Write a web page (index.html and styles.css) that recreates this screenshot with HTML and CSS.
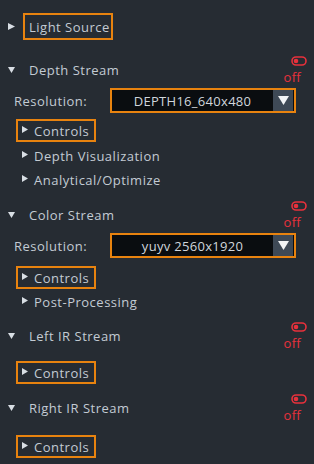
FILE: index.html
```html
<!DOCTYPE html>
<html>
<head>
<meta charset="utf-8">
<link rel="stylesheet" href="styles.css">
</head>
<body>
<div class="panel">
  <div class="top-row">
    <svg class="tri-big" viewBox="0 0 7 7"><polygon points="0,0 7,3.5 0,7" fill="#d8dee4"/></svg>
    <div class="box light">Light Source</div>
  </div>

  <div class="head m18">
    <div class="title"><svg class="tri-big down" viewBox="0 0 7 7"><polygon points="0,0 7,0 3.5,6" fill="#d8dee4"/></svg><span>Depth Stream</span></div>
    <div class="status"><svg class="toggle" viewBox="0 0 16 10"><rect x="1" y="1" width="14" height="8" rx="4" fill="none" stroke="#e8313c" stroke-width="1.6"/><circle cx="5" cy="5" r="2.3" fill="#e8313c"/></svg><span class="off">off</span></div>
  </div>
  <div class="res-row m3">
    <span class="res-label">Resolution:</span>
    <div class="combo"><span class="combo-text">DEPTH16_640x480</span><span class="combo-arrow"><svg viewBox="0 0 11 10"><polygon points="0,0 11,0 5.5,9" fill="#f2f4f6"/></svg></span></div>
  </div>
  <div class="sub box m6"><svg class="tri" viewBox="0 0 6 7"><polygon points="0,0 6,3.5 0,7" fill="#d8dee4"/></svg>Controls</div>
  <div class="sub m2"><svg class="tri" viewBox="0 0 6 7"><polygon points="0,0 6,3.5 0,7" fill="#d8dee4"/></svg>Depth Visualization</div>
  <div class="sub m1"><svg class="tri" viewBox="0 0 6 7"><polygon points="0,0 6,3.5 0,7" fill="#d8dee4"/></svg>Analytical/Optimize</div>

  <div class="head m12">
    <div class="title"><svg class="tri-big down" viewBox="0 0 7 7"><polygon points="0,0 7,0 3.5,6" fill="#d8dee4"/></svg><span>Color Stream</span></div>
    <div class="status"><svg class="toggle" viewBox="0 0 16 10"><rect x="1" y="1" width="14" height="8" rx="4" fill="none" stroke="#e8313c" stroke-width="1.6"/><circle cx="5" cy="5" r="2.3" fill="#e8313c"/></svg><span class="off">off</span></div>
  </div>
  <div class="res-row m3">
    <span class="res-label">Resolution:</span>
    <div class="combo"><span class="combo-text">yuyv 2560x1920</span><span class="combo-arrow"><svg viewBox="0 0 11 10"><polygon points="0,0 11,0 5.5,9" fill="#f2f4f6"/></svg></span></div>
  </div>
  <div class="sub box m8"><svg class="tri" viewBox="0 0 6 7"><polygon points="0,0 6,3.5 0,7" fill="#d8dee4"/></svg>Controls</div>
  <div class="sub m1"><svg class="tri" viewBox="0 0 6 7"><polygon points="0,0 6,3.5 0,7" fill="#d8dee4"/></svg>Post-Processing</div>

  <div class="head m11">
    <div class="title"><svg class="tri-big down" viewBox="0 0 7 7"><polygon points="0,0 7,0 3.5,6" fill="#d8dee4"/></svg><span>Left IR Stream</span></div>
    <div class="status"><svg class="toggle" viewBox="0 0 16 10"><rect x="1" y="1" width="14" height="8" rx="4" fill="none" stroke="#e8313c" stroke-width="1.6"/><circle cx="5" cy="5" r="2.3" fill="#e8313c"/></svg><span class="off">off</span></div>
  </div>
  <div class="sub box m10"><svg class="tri" viewBox="0 0 6 7"><polygon points="0,0 6,3.5 0,7" fill="#d8dee4"/></svg>Controls</div>

  <div class="head m12">
    <div class="title"><svg class="tri-big down" viewBox="0 0 7 7"><polygon points="0,0 7,0 3.5,6" fill="#d8dee4"/></svg><span>Right IR Stream</span></div>
    <div class="status"><svg class="toggle" viewBox="0 0 16 10"><rect x="1" y="1" width="14" height="8" rx="4" fill="none" stroke="#e8313c" stroke-width="1.6"/><circle cx="5" cy="5" r="2.3" fill="#e8313c"/></svg><span class="off">off</span></div>
  </div>
  <div class="sub box m12"><svg class="tri" viewBox="0 0 6 7"><polygon points="0,0 6,3.5 0,7" fill="#d8dee4"/></svg>Controls</div>
</div>
</body>
</html>
```

FILE: styles.css
```css
* { box-sizing: border-box; }
html, body {
  margin: 0;
  padding: 0;
}
body {
  background: #262c33;
  color: #c3cbd3;
  font-family: "Open Sans", "DejaVu Sans", sans-serif;
  font-size: 13px;
  letter-spacing: 0.5px;
  width: 314px;
  height: 464px;
  overflow: hidden;
}
.panel {
  display: flex;
  flex-direction: column;
  padding-right: 7px;
}
.m1 { margin-top: 1px; }
.m2 { margin-top: 2px; }
.m3 { margin-top: 3px; }
.m6 { margin-top: 6px; }
.m8 { margin-top: 8px; }
.m10 { margin-top: 10px; }
.m11 { margin-top: 11px; }
.m12 { margin-top: 12px; }
.m18 { margin-top: 18px; }

.top-row {
  display: flex;
  align-items: center;
  margin-top: 13px;
  padding-left: 8px;
  height: 27px;
}
.tri-big {
  width: 7px;
  height: 7px;
  flex: none;
  margin-right: 8px;
}
.tri-big.down {
  margin-right: 14px;
  margin-top: 1px;
}
.box {
  border: 2px solid #e8830f;
}
.light {
  height: 27px;
  width: 90px;
  display: flex;
  align-items: center;
  padding-left: 4px;
  font-size: 13px;
}
.head {
  display: flex;
  justify-content: space-between;
  align-items: center;
  height: 27px;
  padding-left: 8px;
}
.title {
  display: flex;
  align-items: center;
  margin-top: -3px;
}
.status {
  display: flex;
  flex-direction: column;
  align-items: flex-end;
  margin-top: -2px;
}
.toggle {
  width: 16px;
  height: 10px;
  display: block;
}
.off {
  color: #e8313c;
  font-size: 13px;
  line-height: 16px;
  letter-spacing: 0.3px;
  margin-right: 6px;
  margin-top: 3px;
}
.res-row {
  display: flex;
  align-items: center;
  padding-left: 14px;
  height: 25px;
}
.res-label {
  width: 96px;
  flex: none;
}
.combo {
  width: 186px;
  height: 25px;
  border: 2px solid #e8830f;
  background: #0a0d10;
  display: flex;
  align-items: stretch;
}
.combo-text {
  flex: 1;
  display: flex;
  align-items: center;
  justify-content: center;
  color: #d0d6dc;
  letter-spacing: 0.3px;
}
.combo-arrow {
  width: 20px;
  margin-right: 1px;
  background: #3e4956;
  display: flex;
  align-items: center;
  justify-content: center;
}
.combo-arrow svg {
  width: 11px;
  height: 10px;
}
.sub {
  display: flex;
  align-items: center;
  align-self: flex-start;
  margin-left: 16px;
  height: 23px;
  padding: 0 5px 0 4px;
  border: 2px solid transparent;
}
.sub.box {
  border-color: #e8830f;
}
.tri {
  width: 6px;
  height: 7px;
  flex: none;
  margin-right: 6px;
  margin-top: -2px;
}
```
